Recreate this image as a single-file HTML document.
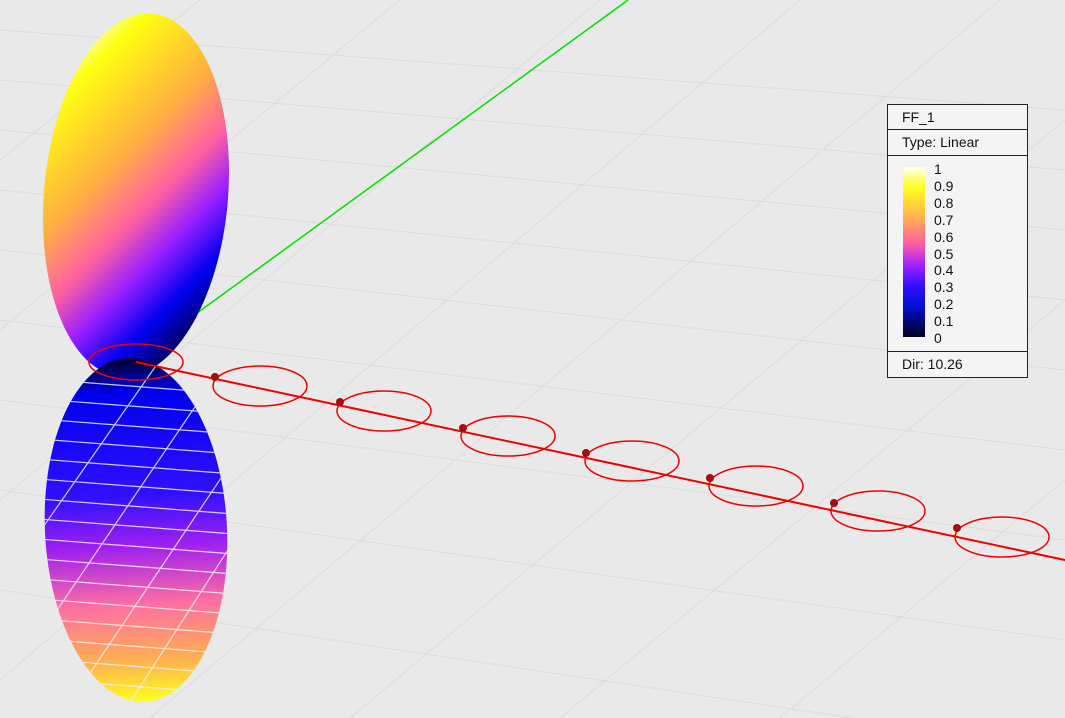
<!DOCTYPE html>
<html><head><style>
html,body{margin:0;padding:0;}
body{width:1065px;height:718px;overflow:hidden;background:#e9e9e9;position:relative;font-family:"Liberation Sans",sans-serif;}
.leg{position:absolute;left:887px;top:104px;width:139px;height:272px;border:1px solid #222;background:#f4f4f4;font-size:14px;color:#111;}
.leg .r{border-bottom:1px solid #222;padding-left:14px;}
.bar{position:absolute;left:15px;top:62px;width:22px;height:170px;background:linear-gradient(to bottom,#fffff0,#ffff20 12%,#ffb050 30%,#ff60a0 45%,#a020ff 58%,#3010ff 70%,#0010d0 82%,#000020 100%);}
.lab{position:absolute;left:46px;font-size:14px;line-height:14px;}
</style></head><body>
<svg width="1065" height="718" style="position:absolute;left:0;top:0">
<defs>
<linearGradient id="up" x1="0.2" y1="0" x2="0.8" y2="1">
<stop offset="0" stop-color="#ffffff"/><stop offset="0.12" stop-color="#ffff10"/><stop offset="0.38" stop-color="#ffb040"/><stop offset="0.55" stop-color="#ff60a0"/><stop offset="0.68" stop-color="#9a20ff"/><stop offset="0.82" stop-color="#0000f0"/><stop offset="1" stop-color="#000010"/></linearGradient>
<linearGradient id="lo" x1="0.5" y1="0" x2="0.5" y2="1">
<stop offset="0" stop-color="#000020"/><stop offset="0.1" stop-color="#0000ee"/><stop offset="0.4" stop-color="#3010ff"/><stop offset="0.55" stop-color="#a020f0"/><stop offset="0.72" stop-color="#ff70a0"/><stop offset="0.88" stop-color="#ffb050"/><stop offset="1" stop-color="#ffff20"/></linearGradient>
<clipPath id="lc"><ellipse cx="136" cy="530" rx="91" ry="172" transform="rotate(-3 136 530)"/></clipPath>
</defs>
<g stroke="#dcdcdc" stroke-width="1" fill="none">
<path d="M0 30 L1065 110"/><path d="M0 80 L1065 170"/><path d="M0 130 L1065 230"/><path d="M0 190 L1065 300"/><path d="M0 250 L1065 370"/><path d="M0 320 L1065 450"/><path d="M0 400 L1065 540"/><path d="M0 490 L1065 640"/><path d="M0 590 L1065 750"/>
<path d="M200 0 L0 160"/><path d="M400 0 L0 330"/><path d="M600 0 L0 500"/><path d="M800 0 L0 680"/><path d="M1000 0 L150 718"/><path d="M1065 120 L350 718"/><path d="M1065 300 L560 718"/><path d="M1065 480 L780 718"/>
</g>
<line x1="160" y1="340" x2="628" y2="0" stroke="#00e000" stroke-width="1.5"/>
<ellipse cx="136" cy="195" rx="92" ry="182" transform="rotate(5 136 195)" fill="url(#up)"/>
<ellipse cx="136" cy="530" rx="91" ry="172" transform="rotate(-3 136 530)" fill="url(#lo)"/>
<g clip-path="url(#lc)" stroke="#f0f0f0" stroke-width="1.2" opacity="0.85">
<path d="M0 376 L260 396"/><path d="M0 396 L260 416"/><path d="M0 416 L260 436"/><path d="M0 436 L260 456"/><path d="M0 456 L260 476"/><path d="M0 476 L260 496"/><path d="M0 496 L260 516"/><path d="M0 516 L260 536"/><path d="M0 536 L260 556"/><path d="M0 556 L260 576"/><path d="M0 576 L260 596"/><path d="M0 596 L260 616"/><path d="M0 616 L260 636"/><path d="M0 636 L260 656"/><path d="M0 656 L260 676"/><path d="M0 676 L260 696"/>
<path d="M160 360 L20 560"/><path d="M220 370 L30 650"/><path d="M260 420 L60 718"/><path d="M260 500 L120 718"/><path d="M260 590 L180 718"/>
</g>
<g fill="none" stroke="#ee0000" stroke-width="1.5">
<ellipse cx="136" cy="362" rx="47" ry="18"/>
<ellipse cx="260" cy="386" rx="47" ry="20"/>
<ellipse cx="384" cy="411" rx="47" ry="20"/>
<ellipse cx="508" cy="436" rx="47" ry="20"/>
<ellipse cx="632" cy="461" rx="47" ry="20"/>
<ellipse cx="756" cy="486" rx="47" ry="20"/>
<ellipse cx="878" cy="511" rx="47" ry="20"/>
<ellipse cx="1002" cy="537" rx="47" ry="20"/>
<line x1="136" y1="362" x2="1065" y2="560" stroke-width="2"/>
</g>
<g fill="#a01010">
<circle cx="215" cy="377" r="4"/><circle cx="340" cy="402" r="4"/><circle cx="463" cy="428" r="4"/><circle cx="586" cy="453" r="4"/><circle cx="710" cy="478" r="4"/><circle cx="834" cy="503" r="4"/><circle cx="957" cy="528" r="4"/>
</g>
</svg>
<div class="leg">
<div class="r" style="height:24px;line-height:24px">FF_1</div>
<div class="r" style="height:25px;line-height:25px">Type: Linear</div>
<div class="bar"></div>
<div class="lab" style="top:57px">1</div><div class="lab" style="top:74px">0.9</div><div class="lab" style="top:91px">0.8</div><div class="lab" style="top:108px">0.7</div><div class="lab" style="top:125px">0.6</div><div class="lab" style="top:142px">0.5</div><div class="lab" style="top:158px">0.4</div><div class="lab" style="top:175px">0.3</div><div class="lab" style="top:192px">0.2</div><div class="lab" style="top:209px">0.1</div><div class="lab" style="top:226px">0</div>
<div style="position:absolute;left:0;right:0;top:246px;border-top:1px solid #222;height:25px;line-height:24px;padding-left:14px">Dir: 10.26</div>
</div>
</body></html>
